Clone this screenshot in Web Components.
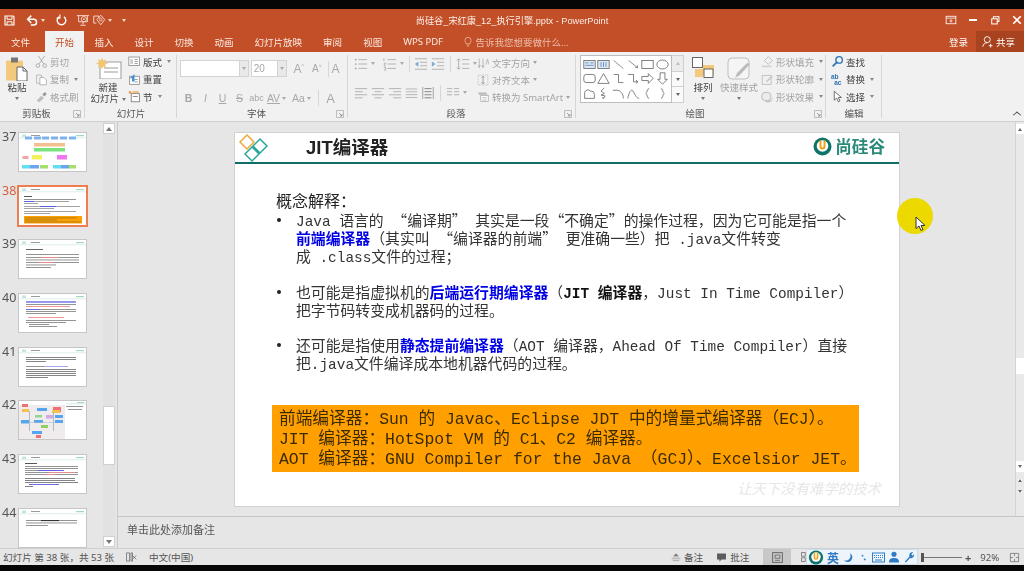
<!DOCTYPE html>
<html lang="zh-Hans">
<head>
<meta charset="utf-8">
<title>PowerPoint</title>
<style>
  html, body { margin: 0; height: 100%; background: #060606; overflow: hidden; }
  body { padding-top: 9px; box-sizing: border-box; width: 1024px; height: 571px; font-family: "Noto Sans", "Noto Sans CJK SC", sans-serif; }
  body > * { filter: blur(.3px); }
</style>
</head>
<body>
<pp-titlebar>尚硅谷_宋红康_12_执行引擎.pptx - PowerPoint</pp-titlebar>
<pp-tabs></pp-tabs>
<pp-ribbon>
  <rb-group w="85" label="剪贴板" launcher>
    <rb-big icon="paste" w="24" ml="5" caret>粘贴</rb-big>
    <rb-col ml="6">
      <rb-item icon="cut" off>剪切</rb-item>
      <rb-item icon="copy" off caret>复制</rb-item>
      <rb-item icon="brush" off>格式刷</rb-item>
    </rb-col>
  </rb-group>
  <rb-group w="92" label="幻灯片">
    <rb-big icon="newslide" w="36" ml="5" caret="inline">新建<br>幻灯片</rb-big>
    <rb-col ml="2">
      <rb-item icon="layout" caret>版式</rb-item>
      <rb-item icon="reset">重置</rb-item>
      <rb-item icon="section" caret>节</rb-item>
    </rb-col>
  </rb-group>
  <rb-group w="171" label="字体" launcher><rb-font></rb-font></rb-group>
  <rb-group w="228" label="段落" launcher><rb-para></rb-para></rb-group>
  <rb-group w="250" label="绘图" launcher>
    <rb-gallery></rb-gallery>
    <rb-big icon="arrange" w="24" ml="7" caret>排列</rb-big>
    <rb-big icon="quick" w="38" ml="5" caret off>快速样式</rb-big>
    <rb-col ml="3">
      <rb-item icon="fill" off caret>形状填充</rb-item>
      <rb-item icon="outline" off caret>形状轮廓</rb-item>
      <rb-item icon="effect" off caret>形状效果</rb-item>
    </rb-col>
  </rb-group>
  <rb-group w="56" label="编辑">
    <rb-col ml="5">
      <rb-item icon="find">查找</rb-item>
      <rb-item icon="replace" caret>替换</rb-item>
      <rb-item icon="select" caret>选择</rb-item>
    </rb-col>
  </rb-group>
</pp-ribbon>
<pp-workspace>
  <thumb-rail slot="rail">
    <slide-thumb num="37" kind="flow"></slide-thumb>
    <slide-thumb num="38" kind="jit" active></slide-thumb>
    <slide-thumb num="39" kind="red"></slide-thumb>
    <slide-thumb num="40" kind="mix"></slide-thumb>
    <slide-thumb num="41" kind="text"></slide-thumb>
    <slide-thumb num="42" kind="chart"></slide-thumb>
    <slide-thumb num="43" kind="dense"></slide-thumb>
    <slide-thumb num="44" kind="short"></slide-thumb>
  </thumb-rail>
  <jit-slide></jit-slide>
</pp-workspace>
<pp-status></pp-status>
<cursor-spot></cursor-spot>

<script>
// all the little ribbon / status icons, 16x16 box unless noted
const ICONS = {
  save: '<path d="M2.5 2.5h10l1 1v10h-11z" fill="none" stroke="#fff" stroke-width="1.4"/><path d="M5 3v3.5h6V3M5 13.5V9.5h6v4" fill="none" stroke="#fff" stroke-width="1.2"/>',
  undo: '<path d="M3 6.5h6.5a3.5 3.5 0 0 1 0 7H6" fill="none" stroke="#fff" stroke-width="1.8"/><path d="M6.5 2 2 6.5 6.5 11" fill="none" stroke="#fff" stroke-width="1.8"/>',
  redo: '<path d="M5 3.6a5.3 5.3 0 1 0 6 0" fill="none" stroke="#fff" stroke-width="1.7"/><path d="M5 1v4.5H1" fill="none" stroke="#fff" stroke-width="1.4" transform="translate(1 -.5)"/>',
  present: '<path d="M1 3h14M3 3v7h10V3M8 10v3M5 14h6" fill="none" stroke="#f6d9cd" stroke-width="1.1"/><circle cx="9" cy="7" r="3" fill="none" stroke="#f6d9cd"/><circle cx="9" cy="7" r="1" fill="#f6d9cd"/>',
  touch: '<path d="M2 3.5h6v2M2 3.5v8h3" fill="none" stroke="#f6d9cd" stroke-width="1.1"/><path d="M10 2.5l4.5 5-4.5 6-4.5-6z" fill="none" stroke="#f6d9cd" stroke-width="1.1"/><circle cx="10" cy="7.5" r="1.6" fill="none" stroke="#f6d9cd"/>',
  ribbonmode: '<rect x="1.5" y="3" width="13" height="10" fill="none" stroke="#fff" stroke-width="1.1"/><path d="M1.5 5.5h13M8 7v4.5M6 9.2h4" fill="none" stroke="#fff"/>',
  restore: '<path d="M5 5V2.5h8v7h-3" fill="none" stroke="#fff" stroke-width="1.5"/><rect x="2.5" y="5.5" width="8" height="7.5" fill="none" stroke="#fff" stroke-width="1.5"/>',
  close: '<path d="M3 3l10 10M13 3 3 13" stroke="#fff" stroke-width="2.2" fill="none"/>',
  user: '<circle cx="7" cy="5.5" r="4" fill="none" stroke="#fff" stroke-width="1.2"/><path d="M1 15c.6-3.4 2.6-5.4 6-5.4M11.5 11v5M9 13.5h5" fill="none" stroke="#fff" stroke-width="1.2"/>',
  bulb: '<path d="M5 11c0-2-2-3-2-5.5a5 5 0 0 1 10 0C13 8 11 9 11 11zM6 13h4M7 15h2" fill="none" stroke="#f4d3c6" stroke-width="1"/>',
  paste: '<rect x="0" y="3.5" width="17" height="20" rx="1" fill="#f3c97d"/><rect x="5" y=".5" width="7" height="5" fill="#777"/><path d="M11 10h6l4 4v10H11z" fill="#fff" stroke="#666"/><path d="M17 10v4h4" fill="none" stroke="#666"/>',
  cut: '<path d="M4 1l7 10M12 1 5 11" stroke="#a0a0a0" fill="none"/><circle cx="3.5" cy="13" r="2.2" fill="none" stroke="#a0a0a0"/><circle cx="12" cy="13" r="2.2" fill="none" stroke="#a0a0a0"/>',
  copy: '<path d="M2 2.5h6v10H2z" fill="#f3f3f3" stroke="#b0b0b0"/><path d="M6 5.5h5l3 3v6H6z" fill="#fff" stroke="#a8a8a8"/>',
  brush: '<path d="M2 13 8 7l3 3-6 5z" fill="#bcbcbc"/><path d="M9 5.5 12 2.5l2.5 2.5-3 3z" fill="#9a9a9a"/>',
  newslide: '<rect x="5" y="5" width="21" height="17" fill="#fff" stroke="#9b9b9b"/><path d="M9 11h14M9 15h14" stroke="#9b9b9b"/><path d="M7 .5l1.2 3 3-1.2-1.2 3 3 1.2-3 1.2 1.2 3-3-1.2-1.2 3-1.2-3-3 1.2 1.2-3-3-1.2 3-1.2-1.2-3 3 1.2z" fill="#f1c66f"/>',
  layout: '<rect x="1" y="2.5" width="13" height="10.5" fill="#fff" stroke="#8a8a8a"/><path d="M3 5h3v6H3z" fill="#c9c9c9"/><path d="M8 5.5h4M8 8h4M8 10.5h4" stroke="#8a8a8a"/>',
  reset: '<rect x="2" y="4" width="12" height="10" fill="#fff" stroke="#8a8a8a"/><path d="M8 1.5 2 6.5h3v4h3" fill="#3f8fd3"/><path d="M8 8h4M8 11h4" stroke="#8a8a8a"/>',
  section: '<rect x="4" y="4.5" width="10" height="10" fill="#fff" stroke="#777"/><path d="M6 8h6" stroke="#777"/><rect x="1" y="1.5" width="3" height="3" fill="#ef9a3c"/><path d="M5.5 2.5h8" stroke="#ef9a3c" stroke-width="1.4"/>',
  find: '<circle cx="10" cy="6" r="4" fill="none" stroke="#2f75b5" stroke-width="1.7"/><path d="M7 9l-5 5" stroke="#2f75b5" stroke-width="2.2"/>',
  replace: '<text x="0" y="7" font-size="8" font-family="Liberation Sans" font-weight="700" fill="#2f75b5">ab</text><text x="4" y="15" font-size="8" font-family="Liberation Sans" font-weight="700" fill="#2f75b5">ac</text>',
  select: '<path d="M4 1.5v11l3-2.5 2 4.5 2-1-2-4.3h3.8z" fill="#fff" stroke="#555"/>',
  fill: '<path d="M4 7l5-5 5 5-5 4.5z" fill="none" stroke="#b8b8b8"/><path d="M1 14h12" stroke="#d0d0d0" stroke-width="2"/>',
  outline: '<path d="M1.5 3h11v11h-11z" fill="none" stroke="#b8b8b8"/><path d="M6 10l7-7 1.5 1.5-7 7z" fill="#c8c8c8"/>',
  effect: '<rect x="1" y="3" width="11" height="10" rx="4" fill="#ececec" stroke="#b0b0b0"/><path d="M12 5a5 5 0 0 1-3 9H5a5 5 0 0 0 7-9z" fill="#9f9f9f"/>',
  arrange: '<rect x="11" y="8" width="11" height="10" fill="#f3c97d"/><rect x=".5" y=".5" width="10" height="10" fill="#fff" stroke="#666"/><rect x="12" y="12" width="9" height="8.5" fill="#fff" stroke="#666"/><rect x="3" y="12" width="8" height="8" fill="#f3c97d"/>',
  quick: '<rect x="1" y="1" width="21" height="21" rx="4" fill="#f7f4f4" stroke="#bdbdbd"/><path d="M23 7 13 18l-5 3 2-5 10-10z" fill="#bcbcbc"/>',
  launcher: '<path d="M.5 .5h7v7h-7z" fill="none" stroke="#b0b0b0" stroke-width=".8"/><path d="M3 3l3 3M6 4v2H4" stroke="#888" fill="none" stroke-width=".8"/>',
  notes: '<path d="M3 7h10M1 10h14M3 13h10M8 2 5 5h6z" fill="#666" stroke="#666" stroke-width=".7"/>',
  comment: '<path d="M1.5 2h13v9H8l-3 3v-3H1.5z" fill="#5c5c5c"/>',
  normal: '<rect x="2" y="2" width="12" height="12" fill="none" stroke="#666" stroke-width="1.2"/><path d="M5 5h6v4H5zM5 11.5h6" fill="none" stroke="#666"/>',
  sorter: '<path d="M2 2h5v5H2zM9 2h5v5H9zM2 9h5v5H2zM9 9h5v5H9z" fill="none" stroke="#666"/>',
  spell: '<path d="M2 2.5h4v11H2zM8 2.5h2v11H8z" fill="none" stroke="#666"/><path d="M10 6l5 5M15 6l-5 5" stroke="#666" fill="none"/>',
  fit: '<path d="M2 2h12v12H2z" fill="none" stroke="#666"/><path d="M8 2v4M8 10v4M2 8h4M10 8h4" stroke="#666"/>'
};

// small css triangles used by all the dropdown carets
const CARET = '<i style="display:inline-block;width:0;height:0;border:2.5px solid transparent;border-top:3px solid currentColor;border-bottom:0;vertical-align:middle"></i>';
const CARET_UP = '<i style="display:inline-block;width:0;height:0;border:2.5px solid transparent;border-bottom:3px solid currentColor;border-top:0;vertical-align:middle"></i>';

function svg(name, w, h, vb) {
  return `<svg width="${w}" height="${h}" viewBox="${vb || '0 0 16 16'}" style="display:block;flex:none">${ICONS[name]}</svg>`;
}

class PpElement extends HTMLElement {
  render(html) { this.attachShadow({ mode: 'open' }).innerHTML = html; }
}

class PpTitlebar extends PpElement {
  connectedCallback() {
    this.render(`<style>
      :host { display: flex; align-items: center; height: 22px; background: #c24f27; color: #fff; }
      .qat { display: flex; align-items: center; padding-left: 3px; width: 140px; box-sizing: border-box; }
      .qat span { display: flex; align-items: center; color: #f6d9cd; }
      .title { flex: 1; text-align: center; font: 9.2px "Liberation Sans", "Noto Sans CJK SC", sans-serif; color: #fbeee8; white-space: nowrap; padding-right: 56px; }
      .win { display: flex; align-items: center; }
      .win span { width: 22px; display: flex; justify-content: center; align-items: center; }
      .win span:last-child { width: 18px; justify-content: flex-end; padding-right: 1px; box-sizing: border-box; }
      .min { width: 8px; height: 2px; background: #fff; display: block; }
    </style>
    <div class="qat">
      <span style="margin-right:10px">${svg('save', 13, 13)}</span>
      <span style="margin-right:2px">${svg('undo', 13, 13)}</span><span style="margin-right:10px">${CARET}</span>
      <span style="margin-right:8px">${svg('redo', 13, 13)}</span>
      <span style="margin-right:2px">${svg('present', 14, 14)}</span>
      <span style="margin-right:2px">${svg('touch', 14, 14)}</span><span style="margin-right:10px">${CARET}</span>
      <span>${CARET}</span>
    </div>
    <div class="title"><slot></slot></div>
    <div class="win">
      <span>${svg('ribbonmode', 12, 12)}</span><span><b class="min"></b></span>
      <span>${svg('restore', 11, 11)}</span>
      <span>${svg('close', 12, 12)}</span>
    </div>`);
  }
}

class PpTabs extends PpElement {
  connectedCallback() {
    const tabs = ['文件', '开始', '插入', '设计', '切换', '动画', '幻灯片放映', '审阅', '视图', 'WPS PDF'];
    this.render(`<style>
      :host { display: flex; align-items: stretch; height: 21px; background: #c24f27; color: #fbe9e2; font-size: 9.5px; }
      .tab { padding: 0 10.5px; display: flex; align-items: center; white-space: nowrap; }
      .tab:first-of-type { padding: 0 15px 0 11px; }
      .tab.on { background: #f1f1f1; color: #c24f27; padding: 0 10px; }
      .tell { display: flex; align-items: center; gap: 3px; margin-left: 9px; color: #eebfae; flex: 1; }
      .login { align-self: center; padding-right: 8px; color: #fff; }
      .share { display: flex; align-items: center; gap: 2px; width: 48px; box-sizing: border-box; padding-left: 6px; background: #a8431f; color: #fff; }
    </style>
    ${tabs.map((t, i) => `<div class="tab${i == 1 ? ' on' : ''}">${t}</div>`).join('')}
    <div class="tell">${svg('bulb', 10, 12)}告诉我您想要做什么...</div>
    <div class="login">登录</div>
    <div class="share">${svg('user', 12, 13)}共享</div>`);
  }
}

class PpRibbon extends PpElement {
  connectedCallback() {
    this.render(`<style>
      :host { display: flex; height: 70px; background: #f1f1f1; border-bottom: 1px solid #cfcfcf; box-sizing: border-box; position: relative; }
      .fold { position: absolute; right: 4px; bottom: 3px; width: 5px; height: 5px; border: solid #555; border-width: 1.2px 0 0 1.2px; transform: scaleY(.8) rotate(45deg); }
    </style><slot></slot><span class="fold"></span>`);
  }
}

class RbGroup extends PpElement {
  connectedCallback() {
    const launcher = this.hasAttribute('launcher');
    this.style.width = this.getAttribute('w') + 'px';
    this.render(`<style>
      :host { display: flex; flex-direction: column; box-sizing: border-box; position: relative; flex: none; }
      :host::after { content: ""; position: absolute; right: 0; top: 3px; bottom: 3px; width: 1px; background: #d6d6d6; }
      .body { display: flex; height: 53px; padding-top: 1px; }
      .label { text-align: center; font-size: 9.5px; line-height: 16px; color: #555; padding-right: ${launcher ? 12 : 0}px; }
      .launch { position: absolute; right: 4px; bottom: 3px; }
    </style>
    <div class="body"><slot></slot></div>
    <div class="label">${this.getAttribute('label')}</div>
    ${launcher ? `<span class="launch">${svg('launcher', 8, 8, '0 0 8 8')}</span>` : ''}`);
  }
}

class RbCol extends PpElement {
  connectedCallback() {
    this.style.marginLeft = (this.getAttribute('ml') || 0) + 'px';
    this.render(`<style>:host { display: flex; flex-direction: column; }</style><slot></slot>`);
  }
}

class RbItem extends PpElement {
  connectedCallback() {
    const off = this.hasAttribute('off');
    this.render(`<style>
      :host { display: flex; align-items: center; height: 17.5px; gap: 2px; font-size: 9.5px; color: ${off ? '#a3a3a3' : '#444'}; white-space: nowrap; }
      .caret { margin-left: 3px; color: #888; display: inline-flex; }
    </style>${svg(this.getAttribute('icon'), 13, 13)}<slot></slot>${this.hasAttribute('caret') ? `<span class="caret">${CARET}</span>` : ''}`);
  }
}

class RbBig extends PpElement {
  connectedCallback() {
    const off = this.hasAttribute('off');
    const caret = this.getAttribute('caret');
    const sizes = { paste: [22, 24, '0 0 22 24'], newslide: [27, 22, '0 0 27 22'], arrange: [22, 21, '0 0 22 21'], quick: [24, 23, '0 0 24 23'] };
    const s = sizes[this.getAttribute('icon')];
    this.style.marginLeft = this.getAttribute('ml') + 'px';
    this.style.width = this.getAttribute('w') + 'px';
    this.render(`<style>
      :host { display: flex; flex-direction: column; align-items: center; font-size: 9.5px; line-height: 11px; color: ${off ? '#a3a3a3' : '#444'}; flex: none; }
      .pic { height: 29px; padding-top: 4px; box-sizing: border-box; display: flex; align-items: flex-start; }
      .txt { text-align: center; white-space: nowrap; }
      .caret { color: #777; line-height: 9px; }
    </style>
    <div class="pic">${svg(this.getAttribute('icon'), s[0], s[1], s[2])}</div>
    <div class="txt"><slot></slot>${caret == 'inline' ? ` <span class="caret">${CARET}</span>` : ''}</div>
    ${caret != 'inline' ? `<div class="caret">${CARET}</div>` : ''}`);
  }
}

class RbFont extends PpElement {
  connectedCallback() {
    this.render(`<style>
      :host { display: flex; flex-direction: column; padding: 7px 0 0 3px; width: 168px; box-sizing: border-box; color: #a8a8a8; font-family: "Liberation Sans", sans-serif; }
      .row { display: flex; align-items: center; }
      .box { height: 15px; background: #fff; border: 1px solid #d3d3d3; }
      .drop { width: 8px; height: 15px; background: #e9e9e9; border: 1px solid #d3d3d3; border-left: 0; display: flex; align-items: center; justify-content: center; color: #aaa; }
      .size { font-size: 10px; line-height: 15px; padding-left: 2px; width: 24px; margin-left: 2px; }
      .grow { font-size: 12px; width: 14px; white-space: nowrap; }
      .sep { width: 1px; height: 16px; background: #d6d6d6; }
      .b { display: inline-block; text-align: center; font-size: 10.5px; }
      .two { margin-top: 13px; }
    </style>
    <div class="row">
      <div class="box" style="width:60px"></div><div class="drop">${CARET}</div>
      <div class="box size">20</div><div class="drop">${CARET}</div>
      <span class="grow" style="margin-left:7px">A<sup style="font-size:5px">^</sup></span>
      <span class="grow" style="margin-left:5px;font-size:10px">A<sup style="font-size:5px">˅</sup></span>
      <span class="sep" style="margin-left:2px"></span>
      <span class="grow" style="margin-left:3px">A</span>
    </div>
    <div class="row two">
      <span class="b" style="width:17px;font-weight:700">B</span>
      <span class="b" style="width:17px;font-style:italic">I</span>
      <span class="b" style="width:17px;text-decoration:underline">U</span>
      <span class="b" style="width:17px;text-decoration:line-through">S</span>
      <span class="b" style="width:17px;font-size:9px;">abc</span>
      <span class="b" style="width:17px;text-decoration:underline">AV</span>
      <span style="width:8px;display:inline-flex">${CARET}</span>
      <span class="b" style="width:17px;">Aa</span>
      <span style="width:11px;display:inline-flex">${CARET}</span>
      <span class="sep"></span>
      <span class="b" style="width:17px;font-size:13px;margin-left:3px">A</span>
    </div>`);
  }
}

// paragraph tools: every one is a handful of strokes
const P_LINES = {
  bul: '<circle cx="2" cy="3" r="1"/><circle cx="2" cy="8" r="1"/><circle cx="2" cy="13" r="1"/><path d="M5 3h10M5 8h10M5 13h10" stroke="#aaa"/>',
  num: '<path d="M1 1.5v3M1 7h2L1 10h2M1 12h2v3H1" stroke="#aaa" fill="none"/><path d="M5 3h10M5 8h10M5 13h10" stroke="#aaa"/>',
  ind1: '<path d="M1 2h14M7 6h8M7 10h8M1 14h14" stroke="#aaa"/><path d="M5 5 1 8l4 3z" fill="#7fa8cf"/>',
  ind2: '<path d="M1 2h14M7 6h8M7 10h8M1 14h14" stroke="#aaa"/><path d="M1 5l4 3-4 3z" fill="#7fa8cf"/>',
  space: '<path d="M3 2v12M1 4l2-2 2 2M1 12l2 2 2-2M7 3h8M7 8h8M7 13h8" stroke="#aaa" fill="none"/>',
  left: '<path d="M1 3h14M1 6.5h9M1 10h14M1 13.5h9" stroke="#aaa"/>',
  center: '<path d="M1 3h14M4 6.5h8M1 10h14M4 13.5h8" stroke="#aaa"/>',
  right: '<path d="M1 3h14M6 6.5h9M1 10h14M6 13.5h9" stroke="#aaa"/>',
  just: '<path d="M1 3h14M1 6.5h14M1 10h14M1 13.5h14" stroke="#aaa"/>',
  dist: '<path d="M2 1v14M14 1v14" stroke="#999"/><path d="M4 3h8M4 6.5h8M4 10h8M4 13.5h8" stroke="#777"/>',
  cols: '<path d="M1 3h6M9 3h6M1 6.5h6M9 6.5h6M1 10h6M9 10h6" stroke="#aaa"/>',
  dir: '<path d="M3 2v12M8 2v12M1.5 11l1.5 3 1.5-3M6.5 11 8 14l1.5-3" stroke="#aaa" fill="none"/><path d="M12 10l2-7 2 7" stroke="#aaa" fill="none"/>',
  align: '<rect x="1.5" y="1.5" width="13" height="13" fill="none" stroke="#bbb" stroke-dasharray="2 1"/><path d="M8 3v10M6 5l2-2 2 2M6 11l2 2 2-2" stroke="#888" fill="none"/>',
  smart: '<path d="M1 2h11l2 3H3z" fill="#b9b9b9"/><rect x="5" y="6" width="10" height="8" fill="#fff" stroke="#aaa"/><path d="M7 9h6M7 12h6" stroke="#aaa"/>'
};
const ptool = (n, w) => `<svg width="${w || 14}" height="14" viewBox="0 0 16 16" style="flex:none" fill="#aaa">${P_LINES[n]}</svg>`;

class RbPara extends PpElement {
  connectedCallback() {
    this.render(`<style>
      :host { display: flex; width: 226px; box-sizing: border-box; padding: 2px 0 0 6px; font-size: 9.5px; color: #a3a3a3; white-space: nowrap; }
      .left { width: 123px; display: flex; flex-direction: column; }
      .row { display: flex; align-items: center; gap: 3px; height: 17px; color: #aaa; }
      .row + .row { margin-top: 12px; }
      .sep { width: 1px; height: 16px; background: #d6d6d6; margin: 0 2px; }
      .right { display: flex; flex-direction: column; margin-top: -1px; }
      .it { display: flex; align-items: center; gap: 3px; height: 17.5px; }
    </style>
    <div class="left">
      <div class="row">${ptool('bul')}${CARET}<span style="width:2px"></span>${ptool('num')}${CARET}<span class="sep"></span>${ptool('ind1')}${ptool('ind2')}<span class="sep"></span>${ptool('space')}${CARET}</div>
      <div class="row">${ptool('left')}${ptool('center')}${ptool('right')}${ptool('just', 13)}${ptool('dist')}<span class="sep"></span>${ptool('cols')}${CARET}</div>
    </div>
    <div class="right">
      <div class="it">${ptool('dir', 12)}文字方向 ${CARET}</div>
      <div class="it">${ptool('align', 12)}对齐文本 ${CARET}</div>
      <div class="it">${ptool('smart', 12)}转换为 SmartArt ${CARET}</div>
    </div>`);
  }
}

const SHAPES = [
  '<rect x="1" y="3" width="14" height="10" fill="#dfe9f5" stroke="#666"/><path d="M3 6h4M9 6h4M3 9h10" stroke="#4f81bd"/>',
  '<rect x="1" y="3" width="14" height="10" fill="#dfe9f5" stroke="#666"/><path d="M5 5v6M8 5v6M11 5v6" stroke="#4f81bd"/>',
  '<path d="M2 3l12 10" stroke="#777" fill="none"/>',
  '<path d="M2 3l11 9M13 12l-3-.5M13 12l-.5-3" stroke="#777" fill="none"/>',
  '<rect x="1" y="3" width="14" height="10" fill="none" stroke="#666"/>',
  '<ellipse cx="8" cy="8" rx="7" ry="5.5" fill="none" stroke="#666"/>',
  '<rect x="1" y="3" width="14" height="10" rx="3" fill="none" stroke="#666"/>',
  '<path d="M8 2 15 14H1z" fill="none" stroke="#666"/>',
  '<path d="M2 3h6v10h6" fill="none" stroke="#666"/>',
  '<path d="M1 3h7v9h5M11 10l2.5 2-2.5 2" fill="none" stroke="#666"/>',
  '<path d="M1 5.5h8V2l6 6-6 6v-3.5H1z" fill="none" stroke="#666"/>',
  '<path d="M5 1h6v8h3l-6 6-6-6h3z" fill="none" stroke="#666"/>',
  '<path d="M2 14V7a4 4 0 0 1 7-2h1a4 4 0 0 1 4 4v5z" fill="none" stroke="#666"/>',
  '<path d="M9 1 5 5l4 3-4 2 5 1-2 3" fill="none" stroke="#666"/><path d="M6 13l3 1" stroke="#666"/>',
  '<path d="M1 4h5c4 0 8 4 8 10" fill="none" stroke="#666"/>',
  '<path d="M1 14C3 4 6 2 8 6s4 8 7 8" fill="none" stroke="#666"/>',
  '<path d="M10 2C7 2 8 7 6 8c2 1 1 6 4 6" fill="none" stroke="#666"/>',
  '<path d="M6 2c3 0 2 5 4 6-2 1-1 6-4 6" fill="none" stroke="#666"/>'
];

class RbGallery extends PpElement {
  connectedCallback() {
    this.render(`<style>
      :host { display: flex; margin: 2px 0 0 4px; height: 48px; flex: none; }
      .grid { width: 92px; box-sizing: border-box; display: grid; grid-template-columns: repeat(6, 1fr); grid-auto-rows: 1fr; background: #fff; border: 1px solid #bdbdbd; padding: 1px; align-items: center; justify-items: center; }
      .bar { width: 12px; display: flex; flex-direction: column; border: 1px solid #cfcfcf; border-left: 0; box-sizing: border-box; color: #666; }
      .bar span { flex: 1; display: flex; align-items: center; justify-content: center; background: #fafafa; }
      .bar span + span { border-top: 1px solid #cfcfcf; }
    </style>
    <div class="grid">${SHAPES.map(s => `<svg width="13" height="13" viewBox="0 0 16 16">${s}</svg>`).join('')}</div>
    <div class="bar"><span style="background:#ececec;color:#bbb">${CARET_UP}</span><span>${CARET}</span><span>${CARET}</span></div>`);
  }
}

class PpWorkspace extends PpElement {
  connectedCallback() {
    this.render(`<style>
      :host { display: flex; height: 426px; background: #e6e6e6; }
      .rail { width: 117px; flex: none; border-right: 1px solid #c9c9c9; }
      .edit { flex: 1; min-width: 0; }
    </style>
    <div class="rail"><slot name="rail"></slot></div>
    <div class="edit"><slot></slot></div>`);
  }
}

class ThumbRail extends PpElement {
  connectedCallback() {
    const arrow = d => `<span style="display:block;width:0;height:0;border:3px solid transparent;${d}"></span>`;
    this.render(`<style>
      :host { display: flex; height: 426px; }
      .list { width: 103px; height: 426px; overflow: hidden; padding-top: 11px; box-sizing: border-box; }
      .bar { width: 12px; margin-right: 2px; background: #e2e2e2; display: flex; flex-direction: column; align-items: stretch; }
      .btn { height: 11px; box-sizing: border-box; margin-top: 1px; background: #fff; display: flex; align-items: center; justify-content: center; border: 1px solid #d0d0d0; }
      .thumb { height: 59px; box-sizing: border-box; margin-top: 272px; background: #fff; border: 1px solid #cfcfcf; }
      .end { margin-top: 71px; }
    </style>
    <div class="list"><slot></slot></div>
    <div class="bar">
      <div class="btn">${arrow('border-bottom:4px solid #777;border-top:0')}</div>
      <div class="thumb"></div>
      <div class="btn end">${arrow('border-top:4px solid #777;border-bottom:0')}</div>
    </div>`);
  }
}

// mini slide contents, [x, y, w, h, colour]
function textRows(ys, x, w, c) { return ys.map((y, i) => [x, y, (i % 3 == 2 ? w * .6 : w), .9, c || '#888']); }
const THUMBS = {
  flow: [[6,3.5,7,3,'#7fb2ec'],[15,3.5,7,3,'#7fb2ec'],[23,3.5,7,3,'#7fb2ec'],[32,3.5,7,3,'#7fb2ec'],[41,3.5,7,3,'#7fb2ec'],[50,3.5,7,3,'#7fb2ec'],[15,10,31,3.5,'#f4bf8f'],[15,15,31,3.5,'#78e27d'],[3.5,23,6,3,'#f0a5a5'],[13,22,10,4.5,'#f4f05b'],[38,22,10,4.5,'#f076f0'],[3,32,8,3.5,'#62e0f0'],[11,32,9,3.5,'#6aa5ee'],[21,32,8,3.5,'#a4e06a'],[34,32,8,3.5,'#62e0f0'],[42,32,8,3.5,'#6aa5ee'],[50,32,7,3.5,'#a4e06a']],
  jit: [[5,29,58,7.5,'#ffa000'],[5,9,8,.9,'#444'],[5,12,52,.9,'#888'],[5,14,10,.9,'#4b4be0'],[15,14,35,.9,'#999'],[5,16,14,.9,'#999'],[5,19,16,.9,'#999'],[21,19,16,.9,'#4b4be0'],[37,19,24,.9,'#999'],[5,21,30,.9,'#999'],[5,24,52,.9,'#999'],[5,26,26,.9,'#999'],[6,30.5,52,.9,'#a87a14'],[6,32.5,32,.9,'#a87a14'],[6,34.5,56,.9,'#a87a14']],
  red: [[7,9,17,.9,'#555'],...textRows([14,17],7,53),[22,17,18,.9,'#ef8d8d'],[7,19.5,53,.9,'#888'],[7,22,53,.9,'#888'],[20,22,14,.9,'#ef8d8d'],[7,24.5,30,.9,'#888'],[7,27,25,.9,'#888']],
  mix: [[7,7,50,2,'#c4ccf2'],[7,7.5,50,.9,'#5b5be0'],[7,10,50,.9,'#888'],[7,12,44,.9,'#ef8d8d'],[7,15,14,.9,'#5b5be0'],[21,15,36,.9,'#888'],[7,17,50,.9,'#888'],[7,19,30,.9,'#888'],[9,23,36,.9,'#ef8d8d'],[7,26,50,.9,'#888'],[7,28,40,.9,'#888'],[10,30,20,.9,'#888'],[10,32,28,.9,'#888']],
  text: [[7,9,50,.9,'#777'],[7,11,50,.9,'#777'],[7,13,20,.9,'#777'],[7,18,18,.9,'#888'],[25,18,24,.9,'#9b9be8'],[7,21,50,.9,'#777'],[7,23,50,.9,'#777'],[7,25,50,.9,'#777'],[7,27,50,.9,'#777'],[7,29,22,.9,'#777']],
  chart: [[0,4,46,34,'#f0ebec'],[3,3,6,3,'#f07070'],[18,7,10,3,'#55a6ee'],[3,8,7,3,'#f4c04f'],[34,6,8,5,'#f07070'],[33,9,8,3,'#f4c04f'],[2,19,9,3.5,'#55a6ee'],[15,19,9,3,'#55a6ee'],[27,14,7,3.5,'#cfa9e0'],[16,14,7,2.5,'#90d890'],[36,14,8,3,'#55a6ee'],[22,24,7,3,'#8fd060'],[36,19,8,3,'#55a6ee'],[13,30,10,3,'#55a6ee'],[17,34,5,3,'#f07070'],[47,5,17,.9,'#888'],[49,8,14,.9,'#888'],[10,10,1,20,'#abc'],[34,11,1,19,'#abc'],[10,21,26,.5,'#abc']],
  dense: [[6,8,12,.9,'#444'],...textRows([11,13,15,17,19],6,53),[19,15,26,.9,'#5b5be0'],[30,17,26,.9,'#ef8d8d'],[25,19,10,.9,'#ef8d8d'],[6,23,50,.9,'#777'],[6,25,50,.9,'#777'],[10,29,30,.9,'#5b5be0'],[6,27,53,.9,'#777'],[6,31,8,.9,'#777']],
  short: [[7,11,26,.9,'#888'],[22,11,18,1.1,'#333'],[40,11,18,.9,'#888'],[7,13.5,51,.9,'#888'],[7,16,22,.9,'#888']]
};

class SlideThumb extends PpElement {
  connectedCallback() {
    const on = this.hasAttribute('active');
    const kind = this.getAttribute('kind');
    const rects = THUMBS[kind].map(r => `<rect x="${r[0]}" y="${r[1]}" width="${r[2]}" height="${r[3]}" fill="${r[4]}"/>`).join('');
    const head = kind == 'chart' ? '<rect x="47" y="2.5" width="20" height=".7" fill="#bfe2dc"/><rect x="58" y="1" width="7" height="1" fill="#9fd7b8"/>'
      : '<rect x="0" y="4.5" width="67" height=".7" fill="#cfe8e3"/><rect x="3" y="1.5" width="4" height="2.5" fill="#c3e6e1"/><rect x="12" y="2" width="9" height="1" fill="#999"/><rect x="57" y="2" width="8" height="1.2" fill="#a5d8bb"/>';
    this.render(`<style>
      :host { display: flex; height: 53.7px; align-items: flex-start; }
      .n { width: 19px; padding-left: 2px; box-sizing: border-box; font: 12.5px/13px "Noto Sans", sans-serif; color: ${on ? '#d4603a' : '#555'}; margin-top: -3px; }
      .frame { background: #fff; width: 67px; height: 38px; ${on ? 'box-shadow: 0 0 0 2px #ee7e50;' : 'outline: 1px solid #c6c6c6;'} }
      svg { display: block; filter: blur(.3px); }
    </style>
    <div class="n">${this.getAttribute('num')}</div>
    <div class="frame"><svg width="67" height="38" viewBox="0 0 67 38">${head}${rects}</svg></div>`);
  }
}

class JitSlide extends PpElement {
  connectedCallback() {
    this.render(`<style>
      :host { display: flex; flex-direction: column; height: 426px; }
      .stage { height: 395px; display: flex; box-sizing: border-box; border-bottom: 1px solid #c4c4c4; }
      .canvas { flex: 1; padding: 11px 0 0 117px; }
      .vbar { width: 8px; background: #e9e9e9; border-left: 1px solid #d4d4d4; display: flex; flex-direction: column; align-items: stretch; color: #666; }
      .vbar i { display: flex; align-items: center; justify-content: center; background: #fff; font-style: normal; }
      .sheet { width: 664px; height: 373px; background: #fff; box-shadow: 0 0 0 1px #d2d2d2; display: flex; flex-direction: column; font-family: "Noto Sans CJK SC", sans-serif; color: #333; }
      .head { height: 29px; border-bottom: 2px solid #0f6e69; display: flex; align-items: center; padding: 0 14px 0 3px; }
      .head svg { flex: none; }
      .h1 { margin-left: 36px; flex: 1; font: 700 18.5px/20px "Liberation Sans", "Noto Sans CJK SC", sans-serif; color: #222; }
      .brand { display: flex; align-items: center; gap: 3px; font: 700 16.6px/18px "Noto Sans CJK SC", sans-serif; color: #2a8a78; margin-top: -3px; }
      .main { padding: 26px 0 0 41px; }
      .h2 { font: 16px/20px "Noto Sans CJK SC", sans-serif; color: #222; height: 21px; }
      ul { list-style: none; margin: 0; padding: 0; }
      li { position: relative; padding-left: 20px; font-size: 14.85px; }
      li + li { margin-top: 18px; }
      li:last-child { margin-top: 17px; }
      li::before { content: ""; position: absolute; left: 1px; top: 7px; width: 4px; height: 4px; background: #222; border-radius: 50%; }
      .ln { display: block; height: 18px; line-height: 18px; white-space: pre; }
      em { font: normal 14.4px/18px "Liberation Mono", monospace; }
      b { color: #0000e6; font-weight: 700; }
      b.k { color: #111; }
      b.k em { font-weight: 700; }
      .note { margin: 33px 0 0 -4px; width: 587px; height: 67px; box-sizing: border-box; background: #ffa000; padding: 2px 0 0 7px; font-size: 16.7px; color: #3a2a00; overflow: hidden; }
      .note .ln { height: 20px; line-height: 20px; }
      .note em { font-size: 16.4px; line-height: 20px; }
      .wm { margin-top: 8px; padding-right: 18px; text-align: right; font: italic 14.4px/16px "Noto Sans CJK SC", sans-serif; color: #e6e6e6; }
      .notes { height: 30px; padding-left: 9px; font: 11px/24px "Noto Sans CJK SC", sans-serif; color: #555; }
    </style>
    <div class="stage">
      <div class="canvas">
        <section class="sheet">
          <header class="head">
            <svg width="32" height="30" viewBox="0 0 32 30">
              <path d="M9 2l7 7-7 7-7-7z" fill="none" stroke="#eda83c" stroke-width="1.5"/>
              <path d="M22 6l7 7-7 7-7-7zM14 14l7 7-7 7-7-7z" fill="none" stroke="#27a79d" stroke-width="1.5"/>
            </svg>
            <div class="h1">JIT编译器</div>
            <div class="brand">
              <svg width="19" height="19" viewBox="0 0 19 19"><circle cx="9.5" cy="9.5" r="9" fill="#0f7468"/><circle cx="9.5" cy="9" r="5.8" fill="#fff"/><path d="M6.5 3.5v6a3 3 0 0 0 6 0v-6h-2v6a1 1 0 0 1-2 0v-6z" fill="#f4a11d"/></svg>
              <span>尚硅谷</span>
            </div>
          </header>
          <div class="main">
            <div class="h2">概念解释：</div>
            <ul>
              <li>
                <span class="ln"><em>Java </em>语言的<em> </em>“编译期”<em> </em>其实是一段“不确定”的操作过程，因为它可能是指一个</span>
                <span class="ln"><b>前端编译器</b>（其实叫<em> </em>“编译器的前端”<em> </em>更准确一些）把<em> .java</em>文件转变</span>
                <span class="ln">成<em> .class</em>文件的过程；</span>
              </li>
              <li>
                <span class="ln">也可能是指虚拟机的<b>后端运行期编译器</b>（<b class="k"><em>JIT </em>编译器</b>，<em>Just In Time Compiler</em>）</span>
                <span class="ln">把字节码转变成机器码的过程。</span>
              </li>
              <li>
                <span class="ln">还可能是指使用<b>静态提前编译器</b>（<em>AOT </em>编译器，<em>Ahead Of Time Compiler</em>）直接</span>
                <span class="ln">把<em>.java</em>文件编译成本地机器代码的过程。</span>
              </li>
            </ul>
            <div class="note">
              <span class="ln">前端编译器：<em>Sun </em>的<em> Javac</em>、<em>Eclipse JDT </em>中的增量式编译器（<em>ECJ</em>）。</span>
              <span class="ln"><em>JIT </em>编译器：<em>HotSpot VM </em>的<em> C1</em>、<em>C2 </em>编译器。</span>
              <span class="ln"><em>AOT </em>编译器：<em>GNU Compiler for the Java </em>（<em>GCJ</em>）、<em>Excelsior JET</em>。</span>
            </div>
          </div>
          <div class="wm">让天下没有难学的技术</div>
        </section>
      </div>
      <div class="vbar">
        <i style="height:10px;margin-top:2px">${CARET_UP}</i>
        <i style="height:16px;margin-top:224px"></i>
        <i style="height:11px;margin-top:87px">${CARET}</i>
        <i style="height:9px;margin-top:4px;background:none">${CARET_UP}</i>
        <i style="height:9px;margin-top:2px;background:none">${CARET}</i>
      </div>
    </div>
    <div class="notes">单击此处添加备注</div>`);
  }
}

class PpStatus extends PpElement {
  connectedCallback() {
    this.render(`<style>
      :host { display: flex; align-items: center; height: 17px; background: #e6e6e6; border-top: 1px solid #cfcfcf; box-sizing: border-box; font-size: 9.6px; color: #555; white-space: nowrap; position: relative; }
      .l { padding-left: 3px; width: 125px; box-sizing: border-box; }
      .lang { margin-left: 12px; width: 100px; }
      .r { margin-left: 422px; display: flex; align-items: center; gap: 3px; height: 16px; }
      .view { width: 28px; height: 16px; background: #c8c8c8; display: flex; align-items: center; justify-content: center; margin-left: 11px; }
      .ime { position: absolute; left: 806px; top: 0; width: 112px; height: 16px; box-sizing: border-box; background: #edf4fb; border: 1px solid #cdddec; display: flex; align-items: center; padding-left: 1px; gap: 3px; font-size: 12px; font-weight: 700; color: #2f7cc4; }
      .zoom { position: absolute; left: 921px; top: 0; right: 0; height: 16px; display: flex; align-items: center; }
      .track { width: 41px; height: 1px; background: #777; position: relative; }
      .track::before { content: ""; position: absolute; left: 0; top: -4px; width: 3px; height: 9px; background: #555; }
    </style>
    <div class="l">幻灯片 第 38 张，共 53 张</div>${svg('spell', 12, 12)}
    <div class="lang">中文(中国)</div>
    <div class="r">
      ${svg('notes', 10, 11)}<span>备注</span><span style="width:7px"></span>
      ${svg('comment', 11, 11)}<span>批注</span>
      <div class="view">${svg('normal', 13, 13)}</div>
      <span style="margin-left:6px">${svg('sorter', 12, 12)}</span>
    </div>
    <div class="ime">
      <svg width="16" height="15" viewBox="0 0 19 19" style="flex:none"><circle cx="9.5" cy="9.5" r="9" fill="#0f7468"/><circle cx="9.5" cy="9" r="6" fill="#fff"/><path d="M6.5 3.5v6a3 3 0 0 0 6 0v-6h-2v6a1 1 0 0 1-2 0v-6z" fill="#f4a11d"/></svg>
      <span style="font-family:'Noto Sans CJK SC',sans-serif">英</span>
      <svg width="10" height="11" viewBox="0 0 12 12" style="flex:none;margin-left:1px"><path d="M8 1a5.5 5.5 0 0 1-7 8 5.5 5.5 0 0 0 10-2 5 5 0 0 0-3-6z" fill="#2f7cc4"/></svg>
      <svg width="6" height="11" viewBox="0 0 8 11" style="flex:none;margin-left:5px"><circle cx="2" cy="3" r="1.2" fill="#2f7cc4"/><circle cx="5" cy="8" r="1.3" fill="#2f7cc4"/></svg>
      <svg width="13" height="11" viewBox="0 0 13 11" style="flex:none;margin-left:2px"><rect x=".5" y="1" width="12" height="9" fill="none" stroke="#2f7cc4"/><path d="M2 3.5h9M2 5.5h9" stroke="#2f7cc4" stroke-dasharray="1 1"/><path d="M3 8h7" stroke="#2f7cc4"/></svg>
      <svg width="10" height="12" viewBox="0 0 11 12" style="flex:none;margin-left:1px"><circle cx="5.5" cy="3" r="2.8" fill="#2f7cc4"/><path d="M0 12c0-4 2-5 5.5-5s5.5 1 5.5 5z" fill="#2f7cc4"/></svg>
      <svg width="11" height="12" viewBox="0 0 12 12" style="flex:none;margin-left:2px"><path d="M1 11l5-5.5C5 3 7 .5 10 1L8 3l1 1.5L11 3c.5 3-2 5-4.5 4L2 12z" fill="#2f7cc4"/></svg>
    </div>
    <div class="zoom">
      <span class="track"></span>
      <span style="margin-left:3px;font-weight:700;font-size:11px">+</span>
      <span style="margin-left:9px">92%</span>
      <span style="margin-left:10px">${svg('fit', 11, 11)}</span>
    </div>`);
  }
}

// yellow presenter highlight with the arrow pointer on top
class CursorSpot extends PpElement {
  connectedCallback() {
    this.render(`<style>
      :host { position: absolute; left: 897px; top: 198px; width: 36px; height: 36px; border-radius: 50%; background: #ecd900; display: block; }
      svg { position: absolute; left: 18px; top: 18px; }
    </style>
    <svg width="11" height="16" viewBox="0 0 11 16"><path d="M1 1v11.5l3-2.5 2 4.5 2-1-2-4h4z" fill="#fff" stroke="#333"/></svg>`);
  }
}

customElements.define('pp-titlebar', PpTitlebar);
customElements.define('pp-tabs', PpTabs);
customElements.define('pp-ribbon', PpRibbon);
customElements.define('rb-group', RbGroup);
customElements.define('rb-col', RbCol);
customElements.define('rb-item', RbItem);
customElements.define('rb-big', RbBig);
customElements.define('rb-font', RbFont);
customElements.define('rb-para', RbPara);
customElements.define('rb-gallery', RbGallery);
customElements.define('pp-workspace', PpWorkspace);
customElements.define('thumb-rail', ThumbRail);
customElements.define('slide-thumb', SlideThumb);
customElements.define('jit-slide', JitSlide);
customElements.define('pp-status', PpStatus);
customElements.define('cursor-spot', CursorSpot);
</script>
</body>
</html>
